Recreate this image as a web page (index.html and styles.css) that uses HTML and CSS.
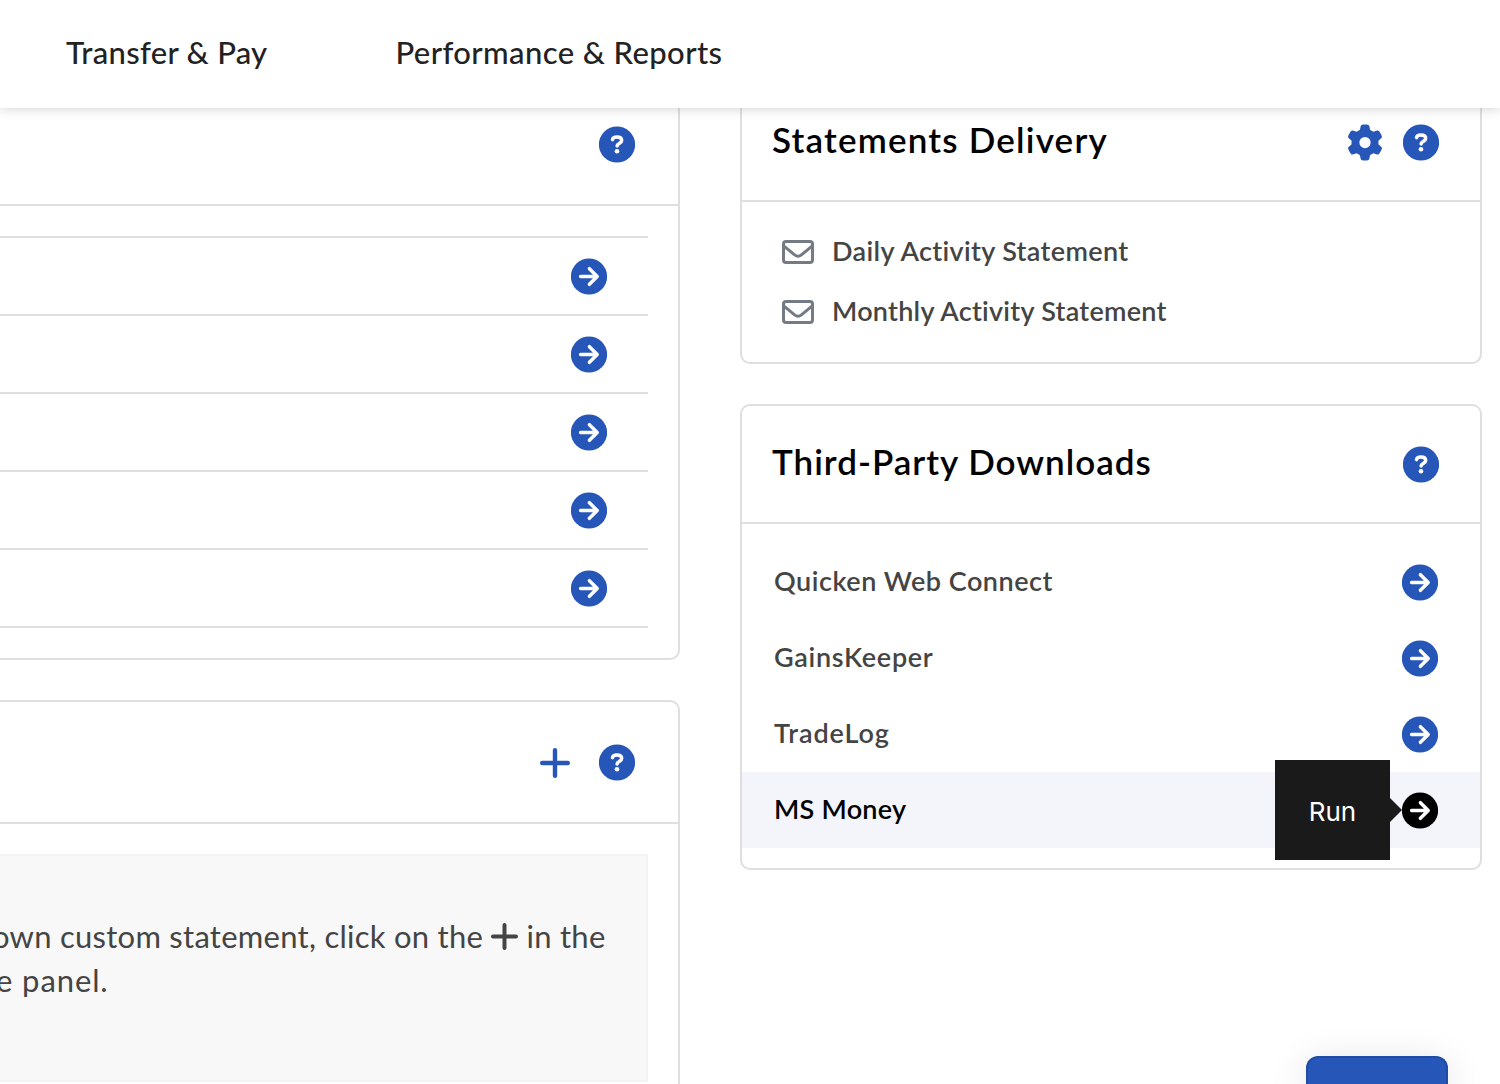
FILE: index.html
```html
<!DOCTYPE html>
<html lang="en">
<head>
<meta charset="utf-8">
<title>Reports</title>
<link rel="stylesheet" href="styles.css">
</head>
<body>
<svg class="symbols" aria-hidden="true">
  <symbol id="help" viewBox="0 0 36 38">
    <circle cx="18" cy="19.5" r="18.1" fill="currentColor"/>
    <path d="M13.5 14.6C13.9 12.7 15.4 12.1 17.9 12.1C20.8 12.1 22.7 13.3 22.7 15.6C22.7 18.5 18.2 18.5 18.1 20.9" fill="none" stroke="#fff" stroke-width="3.5" stroke-linecap="round"/>
    <circle cx="18" cy="26.3" r="2.3" fill="#fff"/>
  </symbol>
  <symbol id="arrow" viewBox="0 0 36 38">
    <circle cx="18" cy="19.5" r="18.1" fill="currentColor"/>
    <path d="M9.6 19.5H26M18.4 11.7L26.2 19.5L18.4 27.3" fill="none" stroke="#fff" stroke-width="3.5" stroke-linecap="round" stroke-linejoin="round"/>
  </symbol>
  <symbol id="gear" viewBox="0 0 512 512">
    <path fill="currentColor" d="M495.9 166.6c3.2 8.7 .5 18.4-6.4 24.6l-43.3 39.4c1.1 8.3 1.7 16.8 1.7 25.4s-.6 17.1-1.7 25.4l43.3 39.4c6.9 6.2 9.6 15.9 6.4 24.6c-4.4 11.9-9.7 23.3-15.8 34.3l-4.7 8.1c-6.6 11-14 21.4-22.1 31.2c-5.9 7.2-15.7 9.6-24.5 6.8l-55.7-17.7c-13.4 10.3-28.2 18.9-44 25.4l-12.5 57.1c-2 9.1-9 16.3-18.2 17.8c-13.8 2.3-28 3.5-42.5 3.5s-28.7-1.2-42.5-3.5c-9.2-1.5-16.2-8.7-18.2-17.8l-12.5-57.1c-15.8-6.5-30.6-15.1-44-25.4L83.1 425.9c-8.8 2.8-18.6 .3-24.5-6.8c-8.1-9.8-15.5-20.2-22.1-31.2l-4.7-8.1c-6.1-11-11.4-22.4-15.8-34.3c-3.2-8.7-.5-18.4 6.4-24.6l43.3-39.4C64.6 273.1 64 264.6 64 256s.6-17.1 1.7-25.4L22.4 191.2c-6.9-6.2-9.6-15.9-6.4-24.6c4.4-11.9 9.7-23.3 15.8-34.3l4.7-8.1c6.6-11 14-21.4 22.1-31.2c5.9-7.2 15.7-9.6 24.5-6.8l55.7 17.7c13.4-10.3 28.2-18.9 44-25.4l12.5-57.1c2-9.1 9-16.3 18.2-17.8C227.3 1.2 241.5 0 256 0s28.7 1.2 42.5 3.5c9.2 1.5 16.2 8.7 18.2 17.8l12.5 57.1c15.8 6.5 30.6 15.1 44 25.4l55.7-17.7c8.8-2.8 18.6-.3 24.5 6.8c8.1 9.8 15.5 20.2 22.1 31.2l4.7 8.1c6.1 11 11.4 22.4 15.8 34.3zM256 336a80 80 0 1 0 0-160 80 80 0 1 0 0 160z"/>
  </symbol>
  <symbol id="plus" viewBox="0 0 30 30">
    <path d="M2.2 15H27.8M15 2.2V27.8" fill="none" stroke="currentColor" stroke-width="4.4" stroke-linecap="round"/>
  </symbol>
  <symbol id="mail" viewBox="0 0 32 24">
    <rect x="1.5" y="1.5" width="29" height="21" rx="2.6" fill="none" stroke="currentColor" stroke-width="3"/>
    <path d="M2 6.2L12.6 14.9Q16 17.6 19.4 14.9L30 6.2" fill="none" stroke="currentColor" stroke-width="3"/>
  </symbol>
</svg>

<header class="topnav">
  <a class="nav-link transfer">Transfer &amp; Pay</a>
  <a class="nav-link performance">Performance &amp; Reports</a>
</header>

<main class="board">
  <div class="col-left">
    <section class="card">
      <div class="card-head"><svg class="icon"><use href="#help"/></svg></div>
      <ul class="reports">
        <li><svg class="icon"><use href="#arrow"/></svg></li>
        <li><svg class="icon"><use href="#arrow"/></svg></li>
        <li><svg class="icon"><use href="#arrow"/></svg></li>
        <li><svg class="icon"><use href="#arrow"/></svg></li>
        <li><svg class="icon"><use href="#arrow"/></svg></li>
      </ul>
    </section>
    <section class="card custom">
      <div class="card-head"><svg class="plus"><use href="#plus"/></svg><svg class="icon"><use href="#help"/></svg></div>
      <div class="notice">
        <p>own custom statement, click on the <svg class="plus-inline"><use href="#plus"/></svg> in the</p>
        <p class="last-line">e panel.</p>
      </div>
    </section>
  </div>

  <div class="col-right">
    <section class="card">
      <div class="card-head"><h2>Statements Delivery</h2><svg class="gear"><use href="#gear"/></svg><svg class="icon"><use href="#help"/></svg></div>
      <ul class="delivery">
        <li><svg class="mail"><use href="#mail"/></svg><span class="daily">Daily Activity Statement</span></li>
        <li><svg class="mail"><use href="#mail"/></svg><span>Monthly Activity Statement</span></li>
      </ul>
    </section>
    <section class="card">
      <div class="card-head"><h2 class="downloads-title">Third-Party Downloads</h2><svg class="icon"><use href="#help"/></svg></div>
      <ul class="downloads">
        <li><span class="quicken">Quicken Web Connect</span><svg class="icon"><use href="#arrow"/></svg></li>
        <li><span class="gainskeeper">GainsKeeper</span><svg class="icon"><use href="#arrow"/></svg></li>
        <li><span class="tradelog">TradeLog</span><svg class="icon"><use href="#arrow"/></svg></li>
        <li class="active"><span>MS Money</span><svg class="icon"><use href="#arrow"/></svg><div class="tooltip">Run</div></li>
      </ul>
    </section>
  </div>
</main>
<div class="chat-button"></div>
</body>
</html>
```
FILE: styles.css
```css
* { box-sizing: border-box; }
body {
  margin: 0;
  height: 1084px;
  overflow: hidden;
  background: #fff;
  color: #444;
  font-family: Lato, "Liberation Sans", sans-serif;
}
h2, p, ul { margin: 0; padding: 0; }
ul { list-style: none; }
svg { display: block; flex: none; }
.symbols { position: absolute; width: 0; height: 0; }

.topnav {
  position: relative;
  z-index: 2;
  display: flex;
  align-items: center;
  gap: 128px;
  height: 108px;
  padding: 0 0 4px 66px;
  background: #fff;
  box-shadow: 0 0 12px rgba(0, 0, 0, .2);
}
.nav-link {
  color: #222;
  font-size: 31px;
  font-weight: 500;
  white-space: nowrap;
}
.transfer { letter-spacing: .3px; }
.performance { letter-spacing: .4px; }

.board {
  display: flex;
  gap: 60px;
  margin-top: -26px;
}
.col-left { width: 680px; }
.col-right { width: 742px; }
.col-left, .col-right { display: flex; flex-direction: column; gap: 40px; }
.card {
  border: 2px solid #dfdfdf;
  border-radius: 10px;
}
.col-left .card { border-left: 0; border-top-left-radius: 0; border-bottom-left-radius: 0; }
.card-head {
  display: flex;
  align-items: center;
  justify-content: flex-end;
  height: 118px;
  padding: 0 41px 0 30px;
  border-bottom: 2px solid #dfdfdf;
}
.col-left .card-head { height: 122px; padding-right: 43px; }
h2 {
  margin-right: auto;
  padding-bottom: 6px;
  color: #000;
  font-size: 35px;
  font-weight: 600;
  letter-spacing: 1.2px;
}
.downloads-title { letter-spacing: 1px; }

.icon { width: 36px; height: 38px; color: #2756b9; }
.plus { width: 30px; height: 30px; margin: 1px 29px 0 0; color: #2756b9; }
.gear { width: 36px; height: 37px; margin-right: 20px; color: #2756b9; }
.mail { width: 32px; height: 24px; color: #747b84; }

.reports { margin: 30px 30px 30px 0; border-top: 2px solid #dfdfdf; }
.reports li {
  display: flex;
  align-items: center;
  justify-content: flex-end;
  height: 78px;
  padding-right: 41px;
  border-bottom: 2px solid #dfdfdf;
}

.col-left .custom { height: 384px; border-bottom: 0; border-bottom-right-radius: 0; }
.notice {
  height: 228px;
  margin: 30px 30px 0 0;
  padding-top: 58px;
  border: 2px solid #f2f2f2;
  border-left: 0;
  background: #f8f8f8;
  font-size: 31px;
  line-height: 44px;
  letter-spacing: .26px;
  white-space: nowrap;
}
.notice p { height: 44px; margin-left: -8px; }
.notice .last-line { margin-left: -4px; letter-spacing: .9px; }
.plus-inline { display: inline-block; width: 27px; height: 27px; vertical-align: -2px; }

.delivery { padding: 20px 0 20px 40px; }
.delivery li {
  display: flex;
  align-items: center;
  gap: 18px;
  height: 60px;
  font-size: 27px;
  font-weight: 600;
  letter-spacing: .27px;
}
.delivery span { padding-bottom: 4px; }
.daily { letter-spacing: .36px; }

.downloads { padding: 20px 0; }
.downloads li {
  position: relative;
  display: flex;
  align-items: center;
  justify-content: space-between;
  height: 76px;
  padding: 0 42px 0 32px;
  font-size: 27px;
  font-weight: 600;
  letter-spacing: .25px;
}
.downloads span { padding-bottom: 4px; }
.quicken { letter-spacing: .52px; }
.gainskeeper { letter-spacing: .7px; }
.tradelog { letter-spacing: .95px; }
.downloads .active { background: #f4f5fb; color: #000; }
.active .icon { color: #000; }
.tooltip {
  position: absolute;
  top: -12px;
  right: 90px;
  width: 115px;
  height: 100px;
  background: #1a1a1a;
  color: #fff;
  font: 400 26px/103px Inter, sans-serif;
  letter-spacing: 0;
  text-align: center;
}
.tooltip::after {
  content: "";
  position: absolute;
  top: 38px;
  left: 100%;
  border: 12px solid transparent;
  border-right: 0;
  border-left-color: #1a1a1a;
}
.chat-button {
  position: fixed;
  right: 52px;
  bottom: 0;
  width: 142px;
  height: 28px;
  border: 2px solid #204ca6;
  border-bottom: 0;
  border-radius: 12px 12px 0 0;
  background: #2756b9;
  box-shadow: 0 10px 40px rgba(0, 0, 0, .16);
}
```
